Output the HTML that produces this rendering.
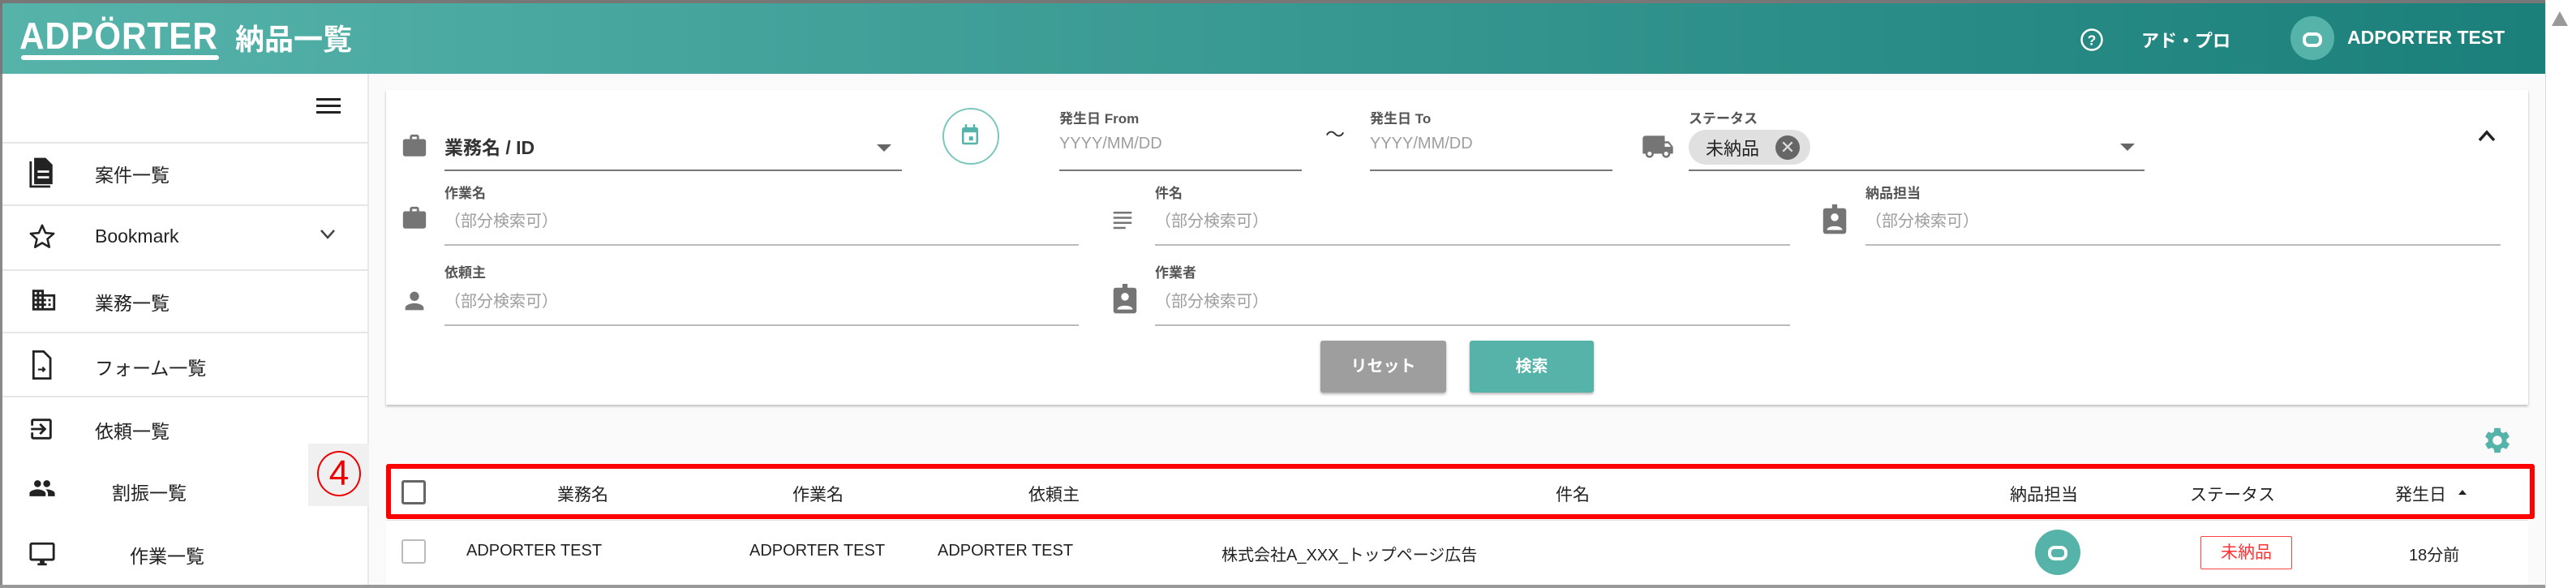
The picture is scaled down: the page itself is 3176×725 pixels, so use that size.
<!DOCTYPE html>
<html><head><meta charset="utf-8"><style>
*{box-sizing:border-box;margin:0;padding:0}
body{width:3176px;height:725px;overflow:hidden;background:#fafafa;font-family:"Liberation Sans","Noto Sans CJK JP",sans-serif;color:#212121;position:relative}
.a{position:absolute}
.hdr{left:0;top:0;width:3138px;height:91px;background:linear-gradient(90deg,#55b3aa,#1b7f7a);border-top:4px solid #777;border-left:3px solid #777}
.sb{left:0;top:91px;width:455px;height:634px;background:#fff;border-right:2px solid #e8e8e8;border-left:3px solid #888}
.sep{left:3px;width:452px;height:2px;background:#e6e6e6}
.nav{font-size:23px;color:#222}
.card{left:476px;top:111px;width:2641px;height:388px;background:#fff;box-shadow:0 2px 3px rgba(0,0,0,.25)}
.lbl{font-size:17px;color:#555;font-weight:bold}
.ph{font-size:20px;color:#9e9e9e}
.ul{height:2px;background:#bbb}
.ul2{height:2px;background:#777}
.th{font-size:21px;color:#222;top:594px}
.td{font-size:20px;color:#222;top:668px}
</style></head><body>
<div class="a hdr"></div>
<div class="a" style="left:24px;top:17px;font-size:46px;color:#fff;letter-spacing:1px;font-weight:bold;transform:scaleX(0.92);transform-origin:left">ADPÖRTER</div>
<div class="a" style="left:26px;top:68px;width:244px;height:6px;border-radius:3px;background:#fff"></div>
<div class="a" style="left:290px;top:20px;font-size:36px;color:#fff;font-weight:bold">納品一覧</div>
<svg class="a" style="left:2564px;top:34px" width="30" height="30" viewBox="0 0 24 24"><circle cx="12" cy="12" r="10" fill="none" stroke="#fff" stroke-width="2"/><text x="12" y="17" font-size="14" text-anchor="middle" fill="#fff" font-family="Liberation Sans" font-weight="bold">?</text></svg>
<div class="a" style="left:2640px;top:33px;font-size:22px;color:#fff;font-weight:bold">アド・プロ</div>
<div class="a" style="left:2824px;top:20px;width:54px;height:54px;border-radius:50%;background:#55b3aa"></div>
<div class="a" style="left:2839px;top:40px;width:24px;height:18px;border:4px solid #fff;border-radius:8px"></div>
<div class="a" style="left:2894px;top:33px;font-size:23px;color:#fff;font-weight:bold">ADPORTER TEST</div>
<div class="a" style="left:3138px;top:0;width:38px;height:725px;background:#fff;border-left:1px solid #ddd"></div>
<div class="a" style="left:3146px;top:14px;width:0;height:0;border-left:10px solid transparent;border-right:10px solid transparent;border-bottom:18px solid #999"></div>

<div class="a sb"></div>
<div class="a" style="left:390px;top:121px;width:30px;height:3px;background:#222;box-shadow:0 8px 0 #222,0 16px 0 #222"></div>
<div class="a sep" style="top:175px"></div><div class="a sep" style="top:252px"></div><div class="a sep" style="top:332px"></div><div class="a sep" style="top:409px"></div><div class="a sep" style="top:488px"></div>
<svg class="a" style="left:35px;top:193px" width="34" height="40" viewBox="0 0 24 28"><path d="M2 4v22h17" fill="none" stroke="#222" stroke-width="2"/><path d="M5 1h10l6 6v17H5z" fill="#222"/><rect x="8" y="12" width="10" height="2" fill="#fff"/><rect x="8" y="17" width="10" height="2" fill="#fff"/></svg>
<div class="a nav" style="left:117px;top:197px">案件一覧</div>
<svg class="a" style="left:35px;top:275px" width="34" height="34" viewBox="0 0 24 24"><path d="M12 2l2.9 6.6 7.1.6-5.4 4.7 1.6 7L12 17.3 5.8 21l1.6-7L2 9.2l7.1-.6z" fill="none" stroke="#222" stroke-width="1.8" stroke-linejoin="round"/></svg>
<div class="a nav" style="left:117px;top:278px">Bookmark</div>
<svg class="a" style="left:394px;top:282px" width="20" height="14" viewBox="0 0 20 14"><path d="M2 2l8 9 8-9" fill="none" stroke="#444" stroke-width="2.5"/></svg>
<svg class="a" style="left:37px;top:353px" width="34" height="34" viewBox="0 0 24 24"><path d="M12 7V3H2v18h20V7H12zM6 19H4v-2h2v2zm0-4H4v-2h2v2zm0-4H4V9h2v2zm0-4H4V5h2v2zm4 12H8v-2h2v2zm0-4H8v-2h2v2zm0-4H8V9h2v2zm0-4H8V5h2v2zm10 12h-8v-2h2v-2h-2v-2h2v-2h-2V9h8v10zm-2-8h-2v2h2v-2zm0 4h-2v2h2v-2z" fill="#222"/></svg>
<div class="a nav" style="left:117px;top:355px">業務一覧</div>
<svg class="a" style="left:38px;top:432px" width="26" height="36" viewBox="0 0 18 26"><path d="M2 1h9l6 6v18H2z" fill="none" stroke="#222" stroke-width="2"/><path d="M6 17h6m-2-2l2 2-2 2" fill="none" stroke="#222" stroke-width="1.5"/></svg>
<div class="a nav" style="left:117px;top:435px">フォーム一覧</div>
<svg class="a" style="left:34px;top:512px" width="34" height="34" viewBox="0 0 24 24"><path d="M10.09 15.59L11.5 17l5-5-5-5-1.41 1.41L12.67 11H3v2h9.67l-2.58 2.59zM19 3H5c-1.11 0-2 .9-2 2v4h2V5h14v14H5v-4H3v4c0 1.1.89 2 2 2h14c1.1 0 2-.89 2-2V5c0-1.1-.9-2-2-2z" fill="#222"/></svg>
<div class="a nav" style="left:117px;top:513px">依頼一覧</div>
<svg class="a" style="left:33px;top:585px" width="38" height="34" viewBox="0 0 24 24"><path d="M16 11c1.66 0 2.99-1.340 2.99-3S17.66 5 16 5c-1.66 0-3 1.34-3 3s1.34 3 3 3zm-8 0c1.66 0 2.99-1.34 2.99-3S9.66 5 8 5C6.34 5 5 6.34 5 8s1.34 3 3 3zm0 2c-2.33 0-7 1.17-7 3.5V19h14v-2.5c0-2.33-4.67-3.5-7-3.5zm8 0c-.29 0-.62.02-.97.05 1.16.84 1.97 1.97 1.970 3.45V19h6v-2.5c0-2.33-4.67-3.5-7-3.5z" fill="#222"/></svg>
<div class="a nav" style="left:138px;top:589px">割振一覧</div>
<div class="a" style="left:380px;top:547px;width:75px;height:77px;background:#f0f0f0"></div>
<div class="a" style="left:391px;top:556px;width:54px;height:56px;border:2px solid #e00;border-radius:50%;color:#e00;font-size:44px;line-height:52px;text-align:center;font-family:'Liberation Sans Narrow','Liberation Sans',sans-serif">4</div>
<svg class="a" style="left:35px;top:666px" width="34" height="34" viewBox="0 0 24 24"><path d="M21 2H3c-1.1 0-2 .9-2 2v12c0 1.1.9 2 2 2h7v2H8v2h8v-2h-2v-2h7c1.1 0 2-.9 2-2V4c0-1.1-.9-2-2-2zm0 14H3V4h18v12z" fill="#222"/></svg>
<div class="a nav" style="left:160px;top:667px">作業一覧</div>

<div class="a card"></div>
<svg class="a" style="left:494px;top:163px" width="34" height="34" viewBox="0 0 24 24"><path d="M20 6h-4V4c0-1.11-.89-2-2-2h-4c-1.11 0-2 .89-2 2v2H4c-1.11 0-2 .89-2 2v11c0 1.11.89 2 2 2h16c1.11 0 2-.89 2-2V8c0-1.11-.89-2-2-2zm-6 0h-4V4h4v2z" fill="#757575"/></svg>
<div class="a" style="left:548px;top:163px;font-size:23px;color:#333;font-weight:bold">業務名 / ID</div>
<div class="a" style="left:1081px;top:178px;border-left:9px solid transparent;border-right:9px solid transparent;border-top:9px solid #666"></div>
<div class="a ul2" style="left:548px;top:209px;width:564px"></div>
<div class="a" style="left:1162px;top:133px;width:70px;height:70px;border:2px solid #7cc7bf;border-radius:50%"></div>
<svg class="a" style="left:1183px;top:152px" width="26" height="30" viewBox="0 0 20 24"><rect x="2" y="4" width="16" height="17" rx="2" fill="#55b3aa"/><rect x="4" y="9" width="12" height="10" fill="#fff"/><rect x="9" y="13" width="4" height="4" fill="#55b3aa"/><rect x="5" y="1" width="2" height="5" fill="#55b3aa"/><rect x="13" y="1" width="2" height="5" fill="#55b3aa"/></svg>
<div class="a lbl" style="left:1306px;top:132px">発生日 From</div>
<div class="a ph" style="left:1306px;top:166px">YYYY/MM/DD</div>
<div class="a ul2" style="left:1306px;top:209px;width:299px"></div>
<div class="a" style="left:1634px;top:146px;font-size:24px;color:#333">～</div>
<div class="a lbl" style="left:1689px;top:132px">発生日 To</div>
<div class="a ph" style="left:1689px;top:166px">YYYY/MM/DD</div>
<div class="a ul2" style="left:1689px;top:209px;width:299px"></div>
<svg class="a" style="left:2023px;top:164px" width="42" height="34" viewBox="0 0 24 20"><path d="M20 6h-3V2H3c-1.1 0-2 .9-2 2v11h2c0 1.66 1.34 3 3 3s3-1.34 3-3h6c0 1.66 1.34 3 3 3s3-1.34 3-3h2v-5l-3-4zM6 16.5c-.83 0-1.5-.67-1.5-1.5s.67-1.5 1.5-1.5 1.5.67 1.5 1.5-.67 1.5-1.5 1.5zm13.5-9l1.96 2.5H17V7.5h2.5zm-1.5 9c-.83 0-1.5-.67-1.5-1.5s.67-1.5 1.5-1.5 1.5.67 1.5 1.5-.67 1.5-1.5 1.5z" fill="#757575"/></svg>
<div class="a lbl" style="left:2082px;top:132px">ステータス</div>
<div class="a" style="left:2082px;top:160px;width:150px;height:43px;border-radius:22px;background:#e0e0e0"></div>
<div class="a" style="left:2103px;top:166px;font-size:22px;color:#222">未納品</div>
<div class="a" style="left:2189px;top:167px;width:30px;height:30px;border-radius:50%;background:#666;color:#e0e0e0;font-size:22px;line-height:29px;text-align:center">✕</div>
<div class="a" style="left:2614px;top:177px;border-left:9px solid transparent;border-right:9px solid transparent;border-top:9px solid #666"></div>
<div class="a ul2" style="left:2082px;top:209px;width:562px"></div>
<svg class="a" style="left:3053px;top:157px" width="26" height="20" viewBox="0 0 26 20"><path d="M4 16l9-10 9 10" fill="none" stroke="#222" stroke-width="3.5"/></svg>

<svg class="a" style="left:494px;top:252px" width="34" height="34" viewBox="0 0 24 24"><path d="M20 6h-4V4c0-1.11-.89-2-2-2h-4c-1.11 0-2 .89-2 2v2H4c-1.11 0-2 .89-2 2v11c0 1.11.89 2 2 2h16c1.11 0 2-.89 2-2V8c0-1.11-.89-2-2-2zm-6 0h-4V4h4v2z" fill="#757575"/></svg>
<div class="a lbl" style="left:548px;top:224px">作業名</div>
<div class="a ph" style="left:548px;top:256px">（部分検索可）</div>
<div class="a ul" style="left:548px;top:301px;width:782px"></div>
<svg class="a" style="left:1368px;top:256px" width="32" height="30" viewBox="0 0 24 24"><path d="M3 4h18v2H3zm0 5h18v2H3zm0 5h18v2H3zm0 5h12v2H3z" fill="#757575"/></svg>
<div class="a lbl" style="left:1424px;top:224px">件名</div>
<div class="a ph" style="left:1424px;top:256px">（部分検索可）</div>
<div class="a ul" style="left:1424px;top:301px;width:783px"></div>
<svg class="a" style="left:2245px;top:252px" width="34" height="38" viewBox="0 0 20 24"><rect x="1" y="3" width="18" height="20" rx="2" fill="#757575"/><rect x="8" y="0" width="4" height="5" fill="#757575"/><circle cx="10" cy="10" r="3" fill="#fff"/><path d="M4 20c0-4 12-4 12 0z" fill="#fff"/></svg>
<div class="a lbl" style="left:2300px;top:224px">納品担当</div>
<div class="a ph" style="left:2300px;top:256px">（部分検索可）</div>
<div class="a ul" style="left:2300px;top:301px;width:783px"></div>

<svg class="a" style="left:494px;top:354px" width="34" height="34" viewBox="0 0 24 24"><path d="M12 12c2.21 0 4-1.79 4-4s-1.79-4-4-4-4 1.79-4 4 1.79 4 4 4zm0 2c-2.67 0-8 1.34-8 4v2h16v-2c0-2.66-5.33-4-8-4z" fill="#757575"/></svg>
<div class="a lbl" style="left:548px;top:322px">依頼主</div>
<div class="a ph" style="left:548px;top:355px">（部分検索可）</div>
<div class="a ul" style="left:548px;top:400px;width:782px"></div>
<svg class="a" style="left:1370px;top:350px" width="34" height="38" viewBox="0 0 20 24"><rect x="1" y="3" width="18" height="20" rx="2" fill="#757575"/><rect x="8" y="0" width="4" height="5" fill="#757575"/><circle cx="10" cy="10" r="3" fill="#fff"/><path d="M4 20c0-4 12-4 12 0z" fill="#fff"/></svg>
<div class="a lbl" style="left:1424px;top:322px">作業者</div>
<div class="a ph" style="left:1424px;top:355px">（部分検索可）</div>
<div class="a ul" style="left:1424px;top:400px;width:783px"></div>

<div class="a" style="left:1628px;top:420px;width:155px;height:64px;background:#9e9e9e;border-radius:3px;box-shadow:0 2px 3px rgba(0,0,0,.3);color:#fff;font-size:20px;font-weight:bold;text-align:center;line-height:64px">リセット</div>
<div class="a" style="left:1812px;top:420px;width:153px;height:64px;background:#55b3aa;border-radius:3px;box-shadow:0 2px 3px rgba(0,0,0,.3);color:#fff;font-size:20px;font-weight:bold;text-align:center;line-height:64px">検索</div>

<svg class="a" style="left:3060px;top:524px" width="38" height="38" viewBox="0 0 24 24"><path d="M19.14 12.94c.04-.3.06-.61.06-.94 0-.32-.02-.64-.07-.94l2.03-1.58a.49.49 0 00.12-.61l-1.92-3.32a.488.488 0 00-.59-.22l-2.39.96c-.5-.38-1.03-.7-1.62-.94l-.36-2.54a.484.484 0 00-.48-.41h-3.84c-.24 0-.43.17-.47.41l-.36 2.54c-.59.24-1.13.57-1.62.94l-2.39-.96c-.22-.08-.47 0-.59.22L2.740 8.87c-.12.21-.08.47.12.61l2.03 1.58c-.05.3-.09.63-.09.94s.2.64.07.94l-2.03 1.58a.49.49 0 00-.12.61l1.92 3.32c.12.22.37.29.59.22l2.39-.96c.5.38 1.03.7 1.62.94l.36 2.54c.05.24.24.41.48.41h3.84c.24 0 .44-.17.47-.41l.36-2.54c.59-.24 1.13-.56 1.62-.94l2.39.96c.22.08.47 0 .59-.22l1.92-3.32c.12-.22.07-.47-.12-.61l-2.01-1.58zM12 15.6c-1.98 0-3.6-1.62-3.6-3.6s1.62-3.6 3.6-3.6 3.6 1.62 3.6 3.6-1.62 3.6-3.6 3.6z" fill="#55b3aa"/></svg>

<div class="a" style="left:476px;top:641px;width:2641px;height:84px;background:#fff;border-top:1px solid #e0e0e0"></div>
<div class="a" style="left:476px;top:572px;width:2649px;height:68px;border:6px solid #f00;border-radius:3px;background:#fff"></div>
<div class="a" style="left:495px;top:592px;width:30px;height:30px;border:3px solid #666;border-radius:3px"></div>
<div class="a th" style="left:687px">業務名</div>
<div class="a th" style="left:977px">作業名</div>
<div class="a th" style="left:1268px">依頼主</div>
<div class="a th" style="left:1918px">件名</div>
<div class="a th" style="left:2478px">納品担当</div>
<div class="a th" style="left:2700px">ステータス</div>
<div class="a th" style="left:2953px">発生日</div>
<div class="a" style="left:3031px;top:604px;border-left:5px solid transparent;border-right:5px solid transparent;border-bottom:6px solid #222"></div>
<div class="a" style="left:495px;top:665px;width:30px;height:30px;border:2px solid #bbb;border-radius:3px"></div>
<div class="a td" style="left:575px">ADPORTER TEST</div>
<div class="a td" style="left:924px">ADPORTER TEST</div>
<div class="a td" style="left:1156px">ADPORTER TEST</div>
<div class="a td" style="left:1506px">株式会社A_XXX_トップページ広告</div>
<div class="a" style="left:2509px;top:653px;width:56px;height:56px;border-radius:50%;background:#55b3aa"></div>
<div class="a" style="left:2525px;top:673px;width:24px;height:18px;border:4px solid #fff;border-radius:8px"></div>
<div class="a" style="left:2713px;top:661px;width:113px;height:41px;border:1px solid #f44;border-radius:2px;color:#f33;font-size:21px;text-align:center;line-height:39px">未納品</div>
<div class="a td" style="left:2970px">18分前</div>
<div class="a" style="left:0;top:721px;width:3138px;height:4px;background:#999"></div>
</body></html>
